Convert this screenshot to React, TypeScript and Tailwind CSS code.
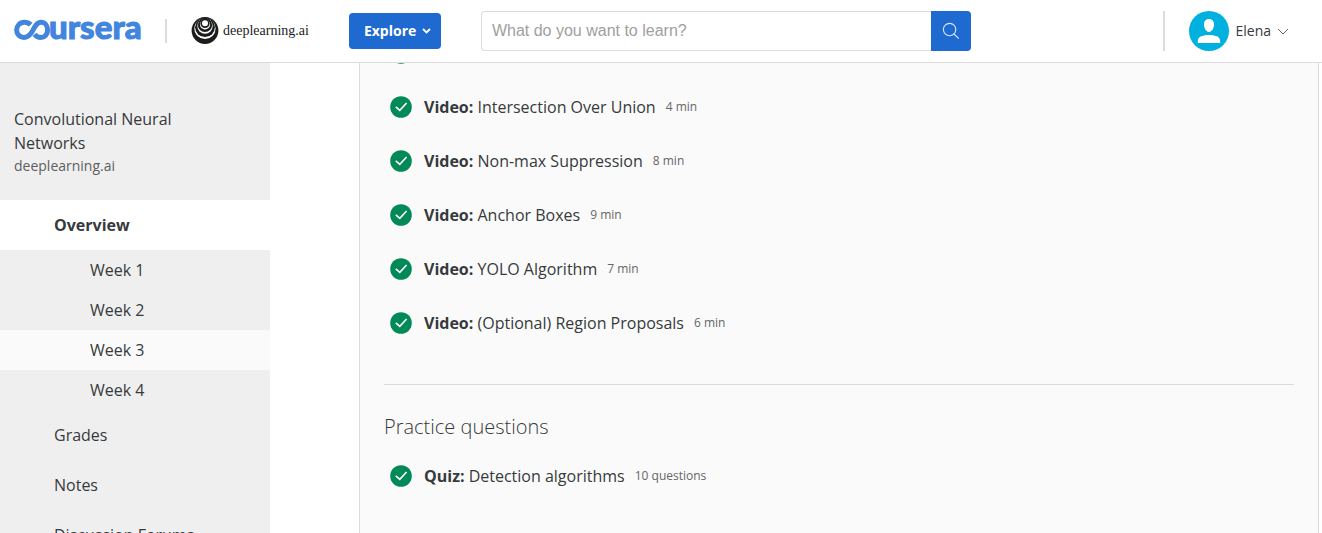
import React from "react";

const videos = [
  { title: "Intersection Over Union", length: "4 min" },
  { title: "Non-max Suppression", length: "8 min" },
  { title: "Anchor Boxes", length: "9 min" },
  { title: "YOLO Algorithm", length: "7 min" },
  { title: "(Optional) Region Proposals", length: "6 min" },
];

const weeks = ["Week 1", "Week 2", "Week 3", "Week 4"];

function CourseraLogo() {
  return (
    <a href="#home" aria-label="Coursera" className="flex shrink-0 text-[#4285df]">
      <svg width="127" height="48" viewBox="0 0 127 48" fill="none" aria-hidden="true">
        <path
          d="M16.6 17.8C14.9 16 12.8 15.3 10.2 15.3C5.8 15.3 2.6 18.9 2.6 23C2.6 27.1 5.8 30.5 9.8 30.5C13.6 30.5 15.9 28.2 18 24.9C20.4 20.2 22.6 15.3 27 15.3C31 15.3 33.6 18.9 33.6 23C33.6 27.1 30.8 30.5 27 30.5C24.2 30.5 22.2 29.4 20.6 27.2"
          stroke="currentColor"
          strokeWidth="5"
        />
        <text
          x="35"
          y="32"
          fill="currentColor"
          stroke="currentColor"
          strokeWidth="1"
          className="font-[Lato] text-[33px] font-black"
        >
          ursera
        </text>
      </svg>
    </a>
  );
}

function PartnerLogo() {
  return (
    <a href="#partner" className="flex shrink-0 items-center gap-1 text-[#222]">
      <svg width="28" height="28" viewBox="0 0 28 28" aria-hidden="true">
        <circle cx="14" cy="13.5" r="13.4" fill="#1c1c1c" />
        <circle cx="14" cy="11.4" r="10.6" fill="#fff" />
        <circle cx="14" cy="10.2" r="9.9" fill="#1c1c1c" />
        <circle cx="14" cy="9" r="7.7" fill="#fff" />
        <circle cx="14" cy="7.9" r="7.1" fill="#1c1c1c" />
        <circle cx="14" cy="7.4" r="5.1" fill="#fff" />
        <circle cx="14" cy="6.4" r="4.6" fill="#1c1c1c" />
        <circle cx="14" cy="6.2" r="3" fill="#fff" />
      </svg>
      <span className="font-['Liberation_Serif',serif] text-sm leading-5">deeplearning.ai</span>
    </a>
  );
}

function Check() {
  return (
    <svg width="22" height="22" viewBox="0 0 22 22" className="shrink-0" fill="none" aria-hidden="true">
      <circle cx="11" cy="11" r="10.8" fill="#028958" />
      <path d="M5.8 10.8L9.8 14.4L16.6 7" stroke="#fff" strokeWidth="1.6" />
    </svg>
  );
}

function Item({ kind, title, note }: { kind: string; title: string; note: string }) {
  return (
    <li>
      <a href="#item" className="flex h-[54px] items-center pl-1.5">
        <Check />
        <span className="ml-3 text-base">
          <strong className="font-bold">{kind}:</strong> {title}
        </span>
        <span className="ml-2.5 text-xs text-[#666]">{note}</span>
      </a>
    </li>
  );
}

function Header() {
  return (
    <header className="flex h-[63px] shrink-0 items-center border-b border-[#dcdcdc] bg-white pl-3.5 pr-[33px]">
      <CourseraLogo />
      <div className="mx-6 h-6 w-0.5 shrink-0 bg-[#dcdcdc]" />
      <PartnerLogo />
      <button
        type="button"
        className="ml-10 flex h-9 w-[92px] shrink-0 items-center gap-1.5 rounded-sm bg-[#1f6ad1] pl-[15px] text-sm font-bold text-white"
      >
        Explore
        <svg width="9" height="6" viewBox="0 0 9 6" fill="none" aria-hidden="true">
          <path d="M1 1L4.5 4.5L8 1" stroke="currentColor" strokeWidth="1.8" />
        </svg>
      </button>
      <form role="search" className="ml-10 flex h-10 w-[490px]">
        <input
          type="search"
          aria-label="Search"
          placeholder="What do you want to learn?"
          className="min-w-0 flex-1 rounded-l-sm border border-r-0 border-[#dcdcdc] px-2.5 font-['Liberation_Sans',sans-serif] text-base outline-none placeholder:text-[#a0a0a0]"
        />
        <button
          type="submit"
          aria-label="Submit search"
          className="flex w-10 shrink-0 items-center justify-center rounded-r-sm bg-[#1f6ad1] text-[#dce8f8]"
        >
          <svg width="18" height="18" viewBox="0 0 18 18" fill="none" stroke="currentColor" strokeWidth="1.1" aria-hidden="true">
            <circle cx="7.6" cy="7.6" r="6.2" />
            <path d="M12 12L16.8 16.6" />
          </svg>
        </button>
      </form>
      <div className="ml-auto h-10 w-0.5 shrink-0 bg-[#dcdcdc]" />
      <button type="button" className="ml-6 flex shrink-0 items-center text-sm">
        <svg width="40" height="40" viewBox="0 0 40 40" aria-hidden="true">
          <circle cx="20" cy="20" r="20" fill="#00b1e0" />
          <path
            fill="#fff"
            d="M20 8C23.4 8 25 10.3 25 13.6C25 17.4 22.8 21 20 21C17.2 21 15 17.4 15 13.6C15 10.3 16.6 8 20 8ZM8.8 32C8.8 27.8 9.6 26.2 12.5 25.3C15 24.5 17 24 20 24C23 24 25 24.5 27.5 25.3C30.4 26.2 31.2 27.8 31.2 32Z"
          />
        </svg>
        <span className="ml-1.5">Elena</span>
        <svg width="12" height="7" viewBox="0 0 12 7" fill="none" className="ml-1.5" aria-hidden="true">
          <path d="M1 1L6 6L11 1" stroke="#666" strokeWidth="1" />
        </svg>
      </button>
    </header>
  );
}

function Sidebar() {
  return (
    <aside className="w-[270px] shrink-0 overflow-hidden bg-[#efefef]">
      <div className="h-[137px] px-3.5 pt-11">
        <h1 className="max-w-48 text-base leading-6">Convolutional Neural Networks</h1>
        <a href="#partner" className="block text-sm leading-[22px] text-[#5e5e5e]">deeplearning.ai</a>
      </div>
      <nav aria-label="Course">
        <a href="#overview" className="flex h-[50px] items-center bg-white pl-[54px] font-bold">Overview</a>
        {weeks.map((week) => (
          <a
            key={week}
            href="#week"
            className={
              week === "Week 3"
                ? "flex h-10 items-center bg-[#fafafa] pl-[90px]"
                : "flex h-10 items-center pl-[90px]"
            }
          >
            {week}
          </a>
        ))}
        {["Grades", "Notes", "Discussion Forums"].map((label) => (
          <a key={label} href="#section" className="flex h-[50px] items-center pl-[54px]">
            {label}
          </a>
        ))}
      </nav>
    </aside>
  );
}

export default function App() {
  return (
    <div className="flex h-screen flex-col overflow-hidden bg-white font-['Open_Sans','Noto_Sans',sans-serif] text-[#373a3c]">
      <Header />
      <div className="flex min-h-0 flex-1">
        <Sidebar />
        <main className="ml-[89px] mr-[3px] min-w-0 flex-1 overflow-hidden border-x border-[#dcdcdc] bg-[#fafafa] px-6">
          <div className="flex h-px items-end overflow-hidden pl-1.5">
            <Check />
          </div>
          <ul className="pt-4">
            {videos.map((video) => (
              <Item key={video.title} kind="Video" title={video.title} note={video.length} />
            ))}
          </ul>
          <hr className="mt-[34px] border-[#dcdcdc]" />
          <h2 className="mt-7 text-xl font-light leading-7">Practice questions</h2>
          <ul className="pt-2">
            <Item kind="Quiz" title="Detection algorithms" note="10 questions" />
          </ul>
        </main>
      </div>
    </div>
  );
}
